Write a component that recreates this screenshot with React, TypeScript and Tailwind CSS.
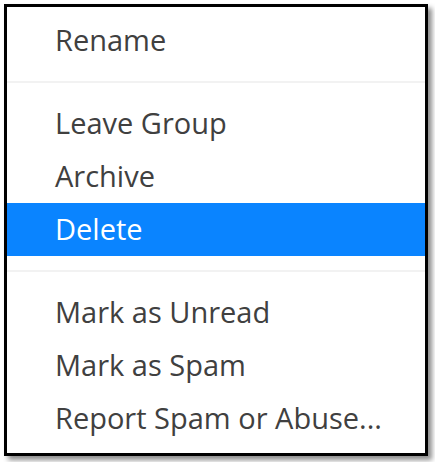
const groups: { label: string; active?: boolean }[][] = [
  [{ label: 'Rename' }],
  [{ label: 'Leave Group' }, { label: 'Archive' }, { label: 'Delete', active: true }],
  [{ label: 'Mark as Unread' }, { label: 'Mark as Spam' }, { label: 'Report Spam or Abuse...' }],
];

export default function App() {
  return (
    <div className="h-[462px] w-[435px] bg-white p-[4px]">
      <div
        className="flex h-[452px] w-[424px] flex-col border-[3px] border-black bg-white py-[7px] shadow-[4px_4px_5px_rgba(0,0,0,0.45)]"
        style={{ fontFamily: '"Open Sans", "Noto Sans", sans-serif' }}
      >
        {groups.map((group, gi) => (
          <div key={gi}>
            {gi > 0 && <div className="my-[14px] h-[2px] bg-[#f2f2f2]" />}
            {group.map((item) => (
              <div
                key={item.label}
                className={
                  'flex h-[53px] items-center pb-[2px] pl-[48px] text-[29px] ' +
                  (item.active ? 'bg-[#0a84ff] text-white' : 'text-[#404040]')
                }
              >
                {item.label}
              </div>
            ))}
          </div>
        ))}
      </div>
    </div>
  );
}
